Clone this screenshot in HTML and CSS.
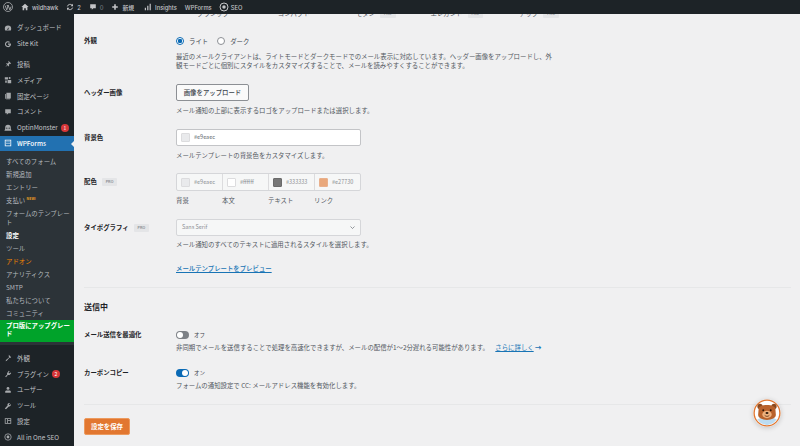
FILE: index.html
```html
<!DOCTYPE html>
<html lang="ja">
<head>
  <meta charset="UTF-8">
  <meta name="viewport" content="width=device-width, initial-scale=1.0">
  <title>WPForms 設定</title>
  <link rel="stylesheet" href="styles.css">
</head>
<body>
  <!-- 管理バー -->
  <header class="adminbar">
    <a class="bar-item bar-logo">
      <svg class="logo-icon" viewBox="0 0 20 20"><circle cx="10" cy="10" r="9" fill="none" stroke="currentColor" stroke-width="1.400"/><path d="M4.300 7.200l3.200 8.600 2.100-5.900-1-2.700M7.600 7.200h4.200M10.500 7.200l3.200 8.600 2.400-6.600" fill="none" stroke="currentColor" stroke-width="1.500"/></svg>
    </a>
    <a class="bar-item bar-site">
      <svg class="bar-icon" viewBox="0 0 20 20"><path d="M10 2L1 10h3v8h4v-5h4v5h4v-8h3z" fill="currentColor"/></svg>
      wildhawk
    </a>
    <a class="bar-item bar-updates">
      <svg class="bar-icon" viewBox="0 0 20 20"><path d="M3.500 8.500a6.800 6.800 0 0 1 11.500-3M16.500 11.500a6.800 6.800 0 0 1-11.500 3" fill="none" stroke="currentColor" stroke-width="2.400"/><path d="M17.500 2v6h-6zM2.500 18v-6h6z" fill="currentColor"/></svg>
      2
    </a>
    <a class="bar-item bar-comments">
      <svg class="bar-icon" viewBox="0 0 20 20"><path d="M3 3h14v10h-6l-4 4v-4H3z" fill="currentColor"/></svg>
      <span class="muted">0</span>
    </a>
    <a class="bar-item bar-new">
      <svg class="bar-icon" viewBox="0 0 20 20"><path d="M8 3h4v5h5v4h-5v5H8v-5H3V8h5z" fill="currentColor"/></svg>
      新規
    </a>
    <a class="bar-item bar-insights">
      <svg class="bar-icon" viewBox="0 0 20 20"><path d="M2 12h3v6H2zM8 7h3v11H8zM14 2h3v16h-3z" fill="currentColor"/></svg>
      Insights
    </a>
    <a class="bar-item bar-wpforms">WPForms</a>
    <a class="bar-item bar-seo">
      <svg class="seo-icon" viewBox="0 0 20 20"><circle cx="10" cy="10" r="8" fill="none" stroke="currentColor" stroke-width="2"/><circle cx="10" cy="10" r="3.500" fill="currentColor"/></svg>
      SEO
    </a>
  </header>

  <div class="wrap">
    <!-- サイドメニュー -->
    <nav class="sidemenu">
      <ul class="menu menu-top">
        <li><svg viewBox="0 0 20 20"><path d="M10 4a8 8 0 0 0-8 8c0 1.500.4 2.800 1 4h14c.6-1.200 1-2.500 1-4a8 8 0 0 0-8-8zm1 9a1.500 1.500 0 1 1-2-1l4-4z" fill="currentColor"/></svg>ダッシュボード</li>
        <li><svg viewBox="0 0 20 20"><path d="M17 9h-7v3h4a4.500 4.500 0 1 1-1.200-5l2.200-2.200A7.500 7.500 0 1 0 17.500 10z" fill="currentColor"/></svg>Site Kit</li>
      </ul>
      <ul class="menu">
        <li><svg viewBox="0 0 20 20"><path d="M11 2l7 7-2 1-1-1-3 3 1 3-1 1-3-3-6 5 5-6-3-3 1-1 3 1 3-3-1-1z" fill="currentColor"/></svg>投稿</li>
        <li><svg viewBox="0 0 20 20"><path d="M2 3h8v6H2zM9 10h9v8H9z" fill="currentColor"/><circle cx="14" cy="5" r="2.500" fill="currentColor"/><path d="M3 11h4v6H3z" fill="currentColor"/></svg>メディア</li>
        <li><svg viewBox="0 0 20 20"><path d="M6 2h11v14H6zM3 5h2v13h10v-1H3z" fill="currentColor"/></svg>固定ページ</li>
        <li><svg viewBox="0 0 20 20"><path d="M3 3h14v10h-6l-4 4v-4H3z" fill="currentColor"/></svg>コメント</li>
        <li class="has-badge"><svg viewBox="0 0 20 20"><path d="M10 2a7 7 0 0 0-7 7v3l-2 5h18l-2-5V9a7 7 0 0 0-7-7zm-3 7a1.500 1.500 0 1 1 0 3 1.500 1.500 0 0 1 0-3zm6 0a1.500 1.500 0 1 1 0 3 1.500 1.500 0 0 1 0-3z" fill="currentColor"/></svg>OptinMonster<span class="badge">1</span></li>
        <li class="current"><svg viewBox="0 0 20 20"><path d="M2 2h16v16H2zm2 2v12h12V4zm2 2h3v2H6zm5 0h3v2h-3zm-5 4h3v2H6zm5 0h3v2h-3z" fill="currentColor" fill-rule="evenodd"/></svg>WPForms</li>
      </ul>
      <ul class="submenu">
        <li>すべてのフォーム</li>
        <li>新規追加</li>
        <li>エントリー</li>
        <li>支払い <sup class="new">NEW!</sup></li>
        <li>フォームのテンプレート</li>
        <li class="sub-active">設定</li>
        <li>ツール</li>
        <li class="sub-addon">アドオン</li>
        <li>アナリティクス</li>
        <li>SMTP</li>
        <li>私たちについて</li>
        <li>コミュニティ</li>
        <li class="sub-upgrade">プロ版にアップグレード</li>
      </ul>
      <ul class="menu menu-bottom">
        <li><svg viewBox="0 0 20 20"><path d="M12 2l6 6-3 2-1-1-7 8-3 1 1-3 8-7-1-1z" fill="currentColor"/></svg>外観</li>
        <li class="has-badge"><svg viewBox="0 0 20 20"><path d="M12 2l2 2-3 3 2 2 3-3 2 2-3 3c-1 1-3 2-5 1l-5 6-2-2 5-5c-1-2 0-4 1-5z" fill="currentColor"/></svg>プラグイン<span class="badge">2</span></li>
        <li><svg viewBox="0 0 20 20"><circle cx="10" cy="6" r="3.500" fill="currentColor"/><path d="M3 17v-3c0-2 2-3 4-3h6c2 0 4 1 4 3v3z" fill="currentColor"/></svg>ユーザー</li>
        <li><svg viewBox="0 0 20 20"><path d="M17 5l-3 3-2-2 3-3a4.500 4.500 0 0 0-6 6l-7 7 3 2 7-7a4.500 4.500 0 0 0 5-6z" fill="currentColor"/></svg>ツール</li>
        <li><svg viewBox="0 0 20 20"><path d="M2 3h16v14H2zm2 2v10h4V5zm6 0v3h6V5zm0 5v5h6v-5z" fill="currentColor" fill-rule="evenodd"/></svg>設定</li>
        <li><svg viewBox="0 0 20 20"><circle cx="10" cy="10" r="8" fill="none" stroke="currentColor" stroke-width="2"/><circle cx="10" cy="10" r="3.500" fill="currentColor"/></svg>All in One SEO</li>
      </ul>
    </nav>

    <!-- 設定フォーム -->
    <main class="content">
      <div class="templates">
        <span class="tpl tpl-1">クラシック</span>
        <span class="tpl tpl-2">コンパクト</span>
        <span class="tpl tpl-3">モダン<i class="pro">PRO</i></span>
        <span class="tpl tpl-4">エレガント<i class="pro">PRO</i></span>
        <span class="tpl tpl-5">テック<i class="pro">PRO</i></span>
      </div>

      <div class="row row-first">
        <label class="row-label">外観</label>
        <div>
          <div class="radios">
            <span class="radio radio-on"></span><span class="radio-text">ライト</span>
            <span class="radio"></span><span class="radio-text">ダーク</span>
          </div>
          <p class="desc">最近のメールクライアントは、ライトモードとダークモードでのメール表示に対応しています。ヘッダー画像をアップロードし、外観モードごとに個別にスタイルをカスタマイズすることで、メールを読みやすくすることができます。</p>
        </div>
      </div>

      <div class="row">
        <label class="row-label row-label-ctl">ヘッダー画像</label>
        <div>
          <button class="btn-upload">画像をアップロード</button>
          <p class="desc">メール通知の上部に表示するロゴをアップロードまたは選択します。</p>
        </div>
      </div>

      <div class="row row-bg">
        <label class="row-label row-label-ctl">背景色</label>
        <div>
          <div class="field"><span class="swatch swatch-bg"></span>#e9eaec</div>
          <p class="desc">メールテンプレートの背景色をカスタマイズします。</p>
        </div>
      </div>

      <div class="row">
        <label class="row-label row-label-ctl">配色<i class="pro">PRO</i></label>
        <div>
          <div class="palette">
            <div class="palette-cell"><span class="swatch swatch-bg"></span>#e9eaec</div>
            <div class="palette-cell"><span class="swatch swatch-white"></span>#ffffff</div>
            <div class="palette-cell"><span class="swatch swatch-text"></span>#333333</div>
            <div class="palette-cell"><span class="swatch swatch-link"></span>#e27730</div>
          </div>
          <div class="palette-labels">
            <span>背景</span><span>本文</span><span>テキスト</span><span>リンク</span>
          </div>
        </div>
      </div>

      <div class="row">
        <label class="row-label row-label-ctl">タイポグラフィ<i class="pro">PRO</i></label>
        <div>
          <div class="field field-select">Sans Serif
            <svg class="chevron" viewBox="0 0 10 6"><path d="M1 1l4 4 4-4" fill="none" stroke="currentColor" stroke-width="1.200"/></svg>
          </div>
          <p class="desc desc-select">メール通知のすべてのテキストに適用されるスタイルを選択します。</p>
          <a class="preview-link">メールテンプレートをプレビュー</a>
        </div>
      </div>

      <hr class="divider">
      <h2 class="section-title">送信中</h2>

      <div class="row row-toggle">
        <label class="row-label">メール送信を最適化</label>
        <div>
          <div class="toggle-line"><span class="toggle"></span>オフ</div>
          <p class="desc desc-wide">非同期でメールを送信することで処理を高速化できますが、メールの配信が1〜2分遅れる可能性があります。 <a class="learn">さらに詳しく</a> <b class="arrow">→</b></p>
        </div>
      </div>

      <div class="row row-toggle">
        <label class="row-label">カーボンコピー</label>
        <div>
          <div class="toggle-line"><span class="toggle toggle-on"></span>オン</div>
          <p class="desc desc-wide">フォームの通知設定で CC: メールアドレス機能を有効化します。</p>
        </div>
      </div>

      <hr class="divider divider-end">
      <button class="btn-save">設定を保存</button>
    </main>
  </div>

  <!-- 右下のマスコット -->
  <div class="mascot">
    <svg viewBox="0 0 30 30">
      <circle cx="15" cy="15" r="13.800" fill="#fff" stroke="#e27730" stroke-width="1.400"/>
      <path d="M4.500 22l5-2.500h11l5 2.500-4 4-6.500 2-6.500-2z" fill="#bcdcf2"/>
      <circle cx="7.500" cy="8" r="2.800" fill="#8a4a20"/>
      <circle cx="22.500" cy="8" r="2.800" fill="#8a4a20"/>
      <path d="M6 11c0-3 4-4.500 9-4.500s9 1.500 9 4.500l.5 6c0 3.500-4.500 5.500-9.500 5.500s-9.500-2-9.500-5.500z" fill="#b9622b"/>
      <ellipse cx="15" cy="16.500" rx="5" ry="4" fill="#eeb27e"/>
      <circle cx="11" cy="12" r="1" fill="#2b1608"/>
      <circle cx="19" cy="12" r="1" fill="#2b1608"/>
      <ellipse cx="15" cy="15" rx="1.600" ry="1.100" fill="#2b1608"/>
      <path d="M12.500 17.500c1.500 1.500 3.500 1.500 5 0" fill="none" stroke="#5a2a10" stroke-width=".8"/>
    </svg>
  </div>
</body>
</html>
```

FILE: styles.css
```css
/* 基本 */
* {
  box-sizing: border-box;
}
html, body {
  height: 100%;
}
body {
  margin: 0;
  overflow: hidden;
  background: #f0f0f1;
  color: #3c434a;
  font-family: "Noto Sans CJK JP", "Noto Sans", sans-serif;
  font-size: 6.4px;
  line-height: 9px;
}
ul {
  list-style: none;
  margin: 0;
  padding: 0;
}
p {
  margin: 0;
}

/* 管理バー */
.adminbar {
  display: flex;
  align-items: center;
  height: 14px;
  background: #1d2327;
  color: #c3c4c7;
}
.bar-item {
  display: flex;
  align-items: center;
  gap: 3px;
  font-family: "Inter", "Noto Sans CJK JP", sans-serif;
  font-size: 5.800px;
  font-weight: 500;
}
.bar-icon {
  width: 8px;
  height: 8px;
  flex: none;
}
.logo-icon {
  width: 10px;
  height: 10px;
}
.seo-icon {
  width: 10px;
  height: 10px;
}
.bar-logo {
  margin-left: 3px;
}
.bar-site {
  margin-left: 8px;
}
.bar-updates {
  margin-left: 8px;
}
.bar-comments {
  margin-left: 8px;
}
.bar-new {
  margin-left: 8px;
}
.bar-insights {
  margin-left: 10px;
}
.bar-wpforms {
  margin-left: 8px;
}
.bar-seo {
  margin-left: 7px;
  gap: 2px;
}
.muted {
  color: #6e7378;
}

.wrap {
  display: flex;
  height: 432px;
}

/* サイドメニュー */
.sidemenu {
  flex: none;
  width: 74px;
  background: #1d2327;
  color: #c3c4c7;
}
.menu li {
  display: flex;
  align-items: center;
  gap: 5px;
  height: 15.800px;
  padding-left: 4px;
}
.menu svg {
  flex: none;
  width: 8px;
  height: 8px;
  color: #a7aaad;
}
.menu-top {
  margin-top: 6px;
  margin-bottom: 5px;
}
.menu .current {
  position: relative;
  background: #2271b1;
  color: #fff;
  font-weight: 500;
}
.menu .current svg {
  color: #fff;
}
.menu .current::after {
  content: "";
  position: absolute;
  right: 0;
  top: 5px;
  border: 3px solid transparent;
  border-right-color: #f0f0f1;
  border-left-width: 0;
}
.badge {
  display: inline-block;
  width: 8px;
  height: 8px;
  margin-left: -2px;
  border-radius: 50%;
  background: #d63638;
  color: #fff;
  font-size: 5px;
  line-height: 8px;
  text-align: center;
}
.submenu {
  background: #2c3338;
  padding-top: 3.500px;
  padding-bottom: 3.500px;
  color: #b4b9be;
}
.submenu li {
  padding: 1.900px 4px 1.900px 6px;
  line-height: 9.200px;
}
.new {
  color: #f0a020;
  font-size: 3.500px;
  font-weight: 700;
  line-height: 0;
}
.sub-active {
  color: #fff;
  font-weight: 700;
}
.sub-addon {
  color: #f18500;
}
.submenu .sub-upgrade {
  padding: 1.800px 4px 3.400px 6px;
  background: #00a32a;
  color: #fff;
  font-weight: 700;
  line-height: 8.400px;
}
.menu-bottom {
  margin-top: 5px;
}

/* 設定フォーム */
.content {
  flex: 1;
  padding: 0 9px 0 10px;
}
.templates {
  display: flex;
  align-items: flex-end;
  height: 4px;
  overflow: hidden;
  line-height: 10px;
  color: #50575e;
}
.tpl {
  display: block;
  flex: none;
  margin-bottom: -1px;
  white-space: nowrap;
}
.tpl-1 {
  margin-left: 113px;
}
.tpl-2 {
  margin-left: 49px;
}
.tpl-3 {
  margin-left: 46px;
}
.tpl-4 {
  margin-left: 35px;
}
.tpl-5 {
  margin-left: 36px;
}
.pro {
  display: inline-block;
  margin-left: 5px;
  padding: 0 4px;
  border-radius: 1px;
  background: #e4e5e7;
  color: #8c8f94;
  font-family: "Liberation Sans", sans-serif;
  font-size: 3.500px;
  font-style: normal;
  font-weight: 700;
  line-height: 8px;
  vertical-align: middle;
}
.row {
  display: grid;
  grid-template-columns: 92px 1fr;
  margin-bottom: 14.500px;
}
.row-first {
  margin-top: 18px;
}
.row-bg {
  margin-bottom: 13.500px;
}
.row-label {
  color: #1d2327;
  font-weight: 700;
  line-height: 10px;
}
.row-label-ctl {
  line-height: 17px;
}
.radios {
  display: flex;
  align-items: center;
  height: 10px;
  margin-bottom: 5.500px;
}
.radio {
  width: 8px;
  height: 8px;
  border: 1px solid #8c8f94;
  border-radius: 50%;
  background: #fff;
}
.radio-on {
  border-color: #0a6ab5;
  background: radial-gradient(circle, #0a6ab5 0 2px, #fff 2.400px);
}
.radio-text {
  margin: 0 9px 0 5px;
}
.desc {
  max-width: 382px;
  margin-top: 4.500px;
  color: #50575e;
}
.desc-select {
  margin-top: 3.500px;
}
.desc-wide {
  max-width: none;
  margin-top: 2.500px;
}
.btn-upload {
  display: block;
  width: 73px;
  height: 17px;
  padding: 0;
  border: 1px solid #8c8f94;
  border-radius: 2px;
  background: #fafafa;
  color: #3c434a;
  font: inherit;
  font-weight: 500;
}
.field {
  display: flex;
  align-items: center;
  width: 185px;
  height: 17px;
  padding: 0 4px;
  border: 1px solid #c3c4c7;
  border-radius: 2px;
  background: #fff;
  color: #646970;
  font-size: 5.500px;
}
.swatch {
  flex: none;
  width: 9px;
  height: 9px;
  margin-right: 4px;
  border: 1px solid #dcdcde;
  border-radius: 1px;
}
.swatch-bg {
  background: #e9eaec;
}
.swatch-white {
  background: #fff;
}
.swatch-text {
  border-color: #6b6b6b;
  background: #777;
}
.swatch-link {
  border-color: #e9b08c;
  background: #e9a87c;
}
.palette {
  display: grid;
  grid-template-columns: repeat(4, 46px);
  width: 185px;
  height: 18px;
  overflow: hidden;
  border: 1px solid #d5d6d9;
  border-radius: 2px;
  background: #f6f7f7;
  color: #8c8f94;
  font-size: 5.500px;
}
.palette-cell {
  display: flex;
  align-items: center;
  padding-left: 4px;
  border-right: 1px solid #dcdcde;
}
.palette-cell:last-child {
  border-right: 0;
}
.palette-labels {
  display: grid;
  grid-template-columns: repeat(4, 46px);
  margin-top: 4.500px;
  color: #50575e;
}
.field-select {
  justify-content: space-between;
  padding: 0 5px;
  border-color: #d5d6d9;
  background: #f6f7f7;
  color: #8c8f94;
}
.chevron {
  width: 5px;
  height: 3px;
  color: #50575e;
}
.preview-link {
  display: block;
  margin-top: 15px;
  color: #1874b5;
  font-weight: 500;
  text-decoration: underline;
}
.divider {
  height: 1px;
  margin: 0 0 13px;
  border: 0;
  background: #e6e7e8;
}
.section-title {
  margin: 0 0 17px;
  color: #1d2327;
  font-size: 8px;
  line-height: 12px;
}
.row-toggle {
  margin-bottom: 16.500px;
}
.toggle-line {
  display: flex;
  align-items: center;
  gap: 5px;
  height: 10px;
  font-size: 5.500px;
}
.toggle {
  position: relative;
  width: 13px;
  height: 8px;
  border-radius: 4px;
  background: #7d8186;
}
.toggle::after {
  content: "";
  position: absolute;
  top: 1px;
  left: 1px;
  width: 6px;
  height: 6px;
  border-radius: 50%;
  background: #fff;
}
.toggle-on {
  background: #0a6ab5;
}
.toggle-on::after {
  left: 6px;
}
.learn {
  margin-left: 5px;
  color: #1874b5;
  text-decoration: underline;
}
.arrow {
  color: #1874b5;
}
.divider-end {
  margin-top: -2px;
  margin-bottom: 13px;
}
.btn-save {
  display: block;
  width: 46px;
  height: 17px;
  padding: 0;
  border: 1px solid #ec9a5e;
  border-radius: 2px;
  background: #e27730;
  color: #fff;
  font: inherit;
  font-weight: 700;
}

/* マスコット */
.mascot {
  position: fixed;
  left: 753px;
  top: 399px;
  width: 28px;
  height: 28px;
  border-radius: 50%;
  box-shadow: 0 1px 5px rgba(0,0,0,0.18);
}
.mascot svg {
  display: block;
  width: 100%;
  height: 100%;
}
```
